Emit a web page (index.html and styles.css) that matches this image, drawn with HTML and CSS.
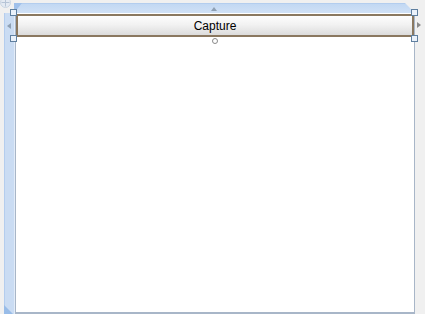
FILE: index.html
```html
<!DOCTYPE html>
<html lang="en">
<head>
    <meta charset="UTF-8">
    <title>Form Designer</title>
    <link rel="stylesheet" href="styles.css">
</head>
<body>
    <div class="designer">
        <svg class="move-glyph" width="11" height="11" viewBox="0 0 11 11">
            <circle cx="5.5" cy="5.5" r="5" fill="#e4eaf2" stroke="#c8d4e2"/>
            <path d="M5.5 1.5v8M1.5 5.5h8" stroke="#b6c4d6" stroke-width="1"/>
        </svg>
        <div class="corner"></div>
        <div class="top-bar"><span class="arrow-up"></span></div>
        <div class="left-bar"><span class="arrow-left"></span></div>
        <div class="form">
            <button class="capture-btn">Capture</button>
        </div>
        <span class="handle h-tl"></span>
        <span class="handle h-bl"></span>
        <span class="handle h-tr"></span>
        <span class="handle h-br"></span>
        <span class="handle-circle"></span>
        <span class="arrow-right"></span>
    </div>
</body>
</html>
```

FILE: styles.css
```css
body {
    margin: 0;
    background: #f0f0f0;
    font-family: 'Liberation Sans', Arial, sans-serif;
    height: 314px;
    overflow: hidden;
}

.designer {
    position: relative;
    display: grid;
    grid-template-columns: 11px 400px;
    grid-template-rows: 10px 301px;
    margin-left: 4px;
    padding-top: 3px;
}

.move-glyph {
    position: absolute;
    left: -4px;
    top: -3px;
}

.top-bar {
    position: relative;
    margin-left: -1px;
    background: linear-gradient(#c2d8f3, #d0e1f6);
    border-top: 1px solid #b3cdee;
    box-sizing: border-box;
    clip-path: polygon(0 0, calc(100% - 10px) 0, 100% 100%, 0 100%);
}

.top-bar::before {
    content: "";
    position: absolute;
    left: 0;
    top: -1px;
    width: 8px;
    height: 10px;
    background: #9fc0ea;
    clip-path: polygon(0 100%, 100% 0, 0 0);
}

.left-bar {
    position: relative;
    background: #cadcf3;
    border-left: 1px solid #b4cdee;
    border-right: 1px solid #e2ecf9;
    box-sizing: border-box;
}

.left-bar::after {
    content: "";
    position: absolute;
    left: -1px;
    bottom: 0;
    width: 9px;
    height: 9px;
    background: #98bce8;
    clip-path: polygon(0 0, 100% 100%, 0 100%);
}

.form {
    background: #fff;
    border-left: 1px solid #a8b6c8;
    border-right: 1px solid #a8b6c8;
    border-bottom: 2px solid #a8b6c8;
    box-sizing: border-box;
    padding-top: 1px;
}

.capture-btn {
    display: block;
    width: 100%;
    height: 23px;
    margin: 0;
    padding: 0;
    border: 2px solid #8a7860;
    background: linear-gradient(#fdfdfd, #f2f2f2 45%, #dcdcdc);
    font-family: 'Liberation Sans', Arial, sans-serif;
    font-size: 12px;
    color: #000;
}

.handle {
    position: absolute;
    width: 5px;
    height: 5px;
    border: 1px solid #5f7f9f;
    background: #eaf1fa;
}

.h-tl { left: 6px; top: 9px; }
.h-bl { left: 6px; top: 35px; }
.h-tr { left: 407px; top: 9px; }
.h-br { left: 407px; top: 35px; }

.handle-circle {
    position: absolute;
    left: 208px;
    top: 38px;
    width: 4px;
    height: 4px;
    border: 1px solid #8a8a8a;
    border-radius: 50%;
    background: #fff;
}

.arrow-up {
    position: absolute;
    left: 197px;
    top: 3px;
    border-left: 3px solid transparent;
    border-right: 3px solid transparent;
    border-bottom: 4px solid #8ea0b4;
}

.arrow-left {
    position: absolute;
    left: 2px;
    top: 10px;
    border-top: 3px solid transparent;
    border-bottom: 3px solid transparent;
    border-right: 4px solid #8ea0b4;
}

.arrow-right {
    position: absolute;
    left: 413px;
    top: 22px;
    border-top: 3px solid transparent;
    border-bottom: 3px solid transparent;
    border-left: 4px solid #8a8a8a;
}
```
